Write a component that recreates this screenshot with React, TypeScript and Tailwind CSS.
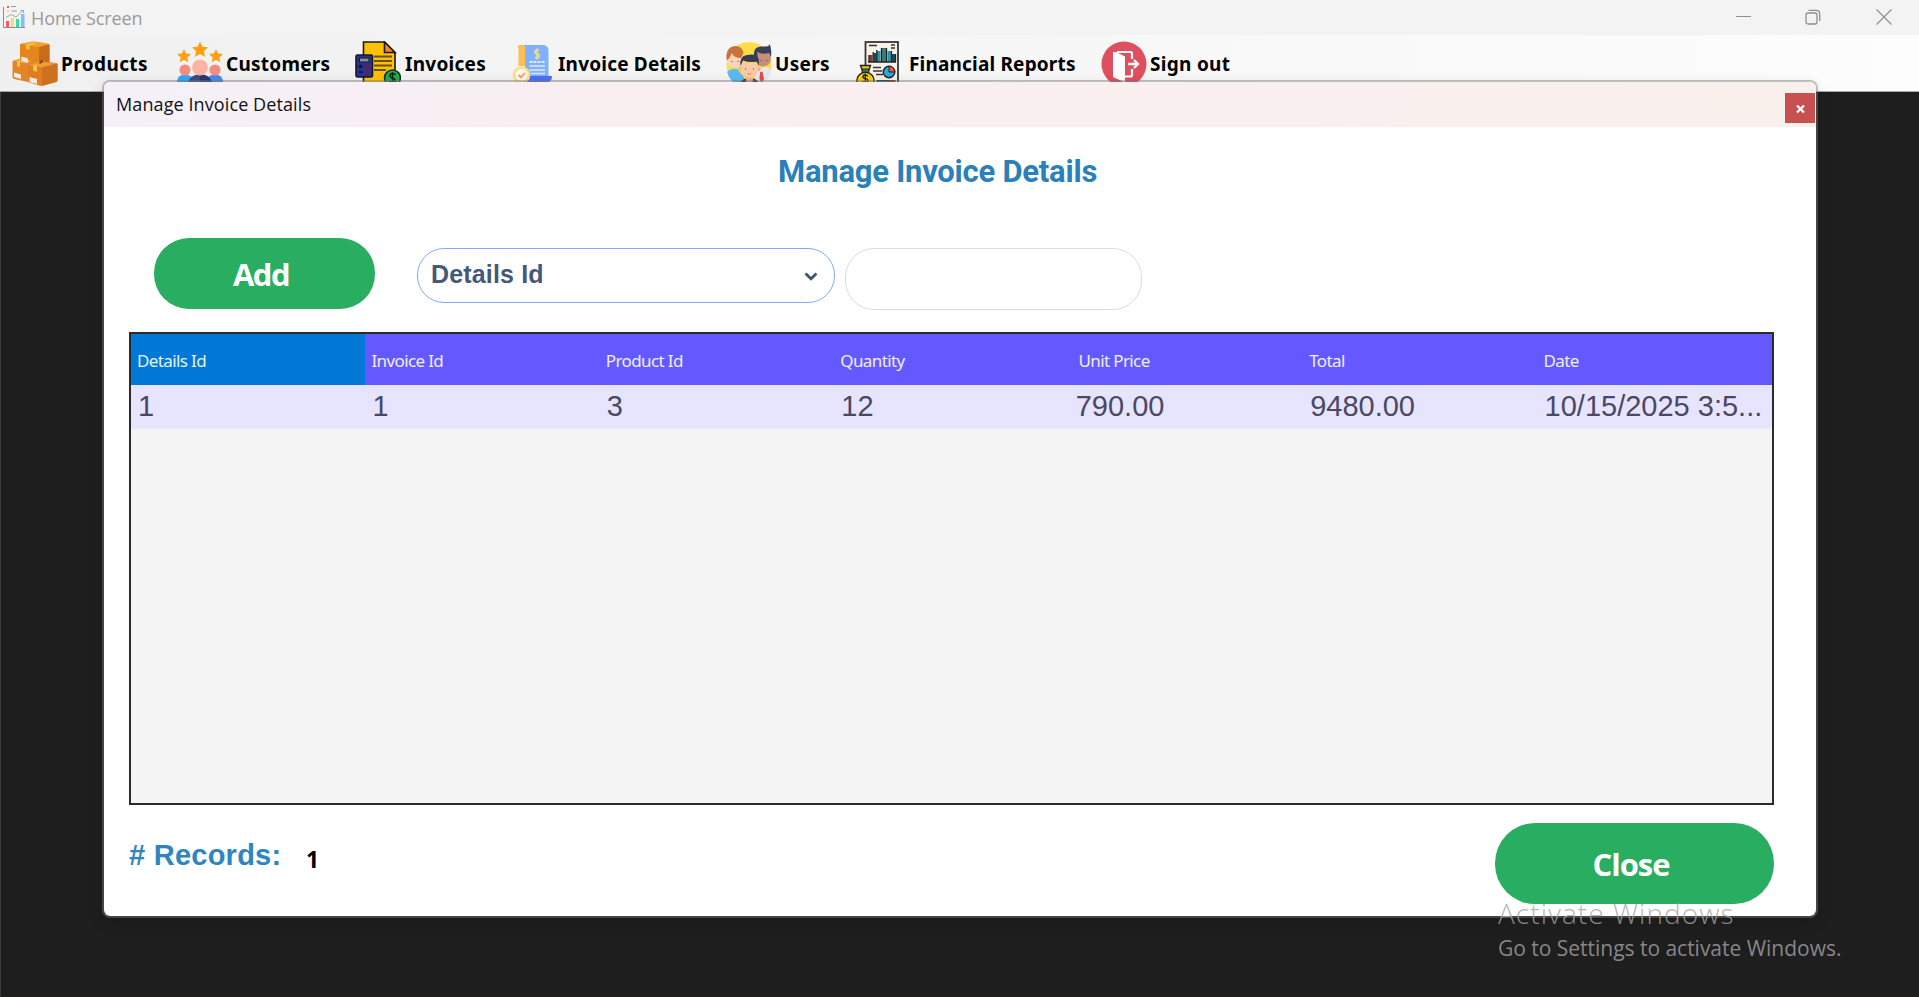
import React from "react";

const STAR = "M0 -8 L2.4 -2.8 L8 -2.2 L3.9 1.7 L5 7.3 L0 4.5 L-5 7.3 L-3.9 1.7 L-8 -2.2 L-2.4 -2.8 Z";

function AppIcon() {
  return (
    <svg width="24" height="24" viewBox="0 0 24 24" fill="none">
      <path d="M1.5 2V22.5H23" stroke="#8d8d95" strokeWidth="1" />
      <rect x="4" y="16" width="3" height="6" fill="#ff5a6a" />
      <rect x="9" y="13" width="3" height="9" fill="#ffd873" />
      <rect x="14" y="14" width="3" height="8" fill="#2fe0a0" />
      <rect x="19" y="9" width="3.5" height="13" fill="#7cc0ff" />
      <path d="M4 12.5L9 9.500L14 12L21 5.500M18.500 5.500H21.500V8" stroke="#a3a3a3" />
      <rect x="5" y="1" width="2" height="2" fill="#ff5a6a" />
      <rect x="5" y="5" width="2" height="2" fill="#ffd873" />
      <path d="M9 1.500H14M9.500 6H15" stroke="#9a9a9a" />
    </svg>
  );
}

function BoxesIcon() {
  return (
    <svg width="46" height="46" viewBox="0 0 46 46">
      <path d="M8 4Q8 3 9 2.800L20 0.800Q23 0.500 26 1L36 2.800Q37.500 3 37.500 4.500V22L20 25L8 20Z" fill="#e3871d" />
      <path d="M8.500 3L20 0.800Q23 0.500 26 1L37 3.200L27 6Z" fill="#f3a22f" />
      <path d="M27 6L37.500 3.500V22L27 24Z" fill="#c96d1a" />
      <path d="M14 3.500L21 1.500L25 2.200L17.500 4.600V9L14 7.600Z" fill="#ffc040" />
      <path d="M0.500 21Q0.500 20 1.500 19.500L9 17.500L22 21V42L16 41L2 38Q0.500 37.500 0.500 36Z" fill="#e2842a" />
      <path d="M0.800 20L9 17.500L20 20L13 22.500Z" fill="#f3a33e" />
      <path d="M16 24.500L28 20.500L44 22Q45.500 22.300 45.500 24V39Q45.500 40.500 44 41L31 44.500Q29.500 45 28 44.700L16 41Z" fill="#df7d20" />
      <path d="M16 24L29 20.500L45 22.300L30 26.500Z" fill="#ee9a36" />
      <path d="M30 26.500L45.500 22.500V39Q45.500 40.500 44 41L30 45Z" fill="#cf701d" />
      <path d="M5 20L8 19.200V26L5 25Z" fill="#ffc040" />
      <path d="M21 24.500L25 23.500V31L21 29.500Z" fill="#ffc040" />
      <path d="M9.500 15.500L16 17.500V22L9.500 20Z" fill="#f6e9e6" />
      <path d="M2 31.500L9 33.500V38L2 36Z" fill="#f6e9e6" />
      <path d="M17.500 36L25 38V43L17.500 41Z" fill="#f6e9e6" />
      <path d="M27 22L30 18.500L31 21L28 23Z" fill="#7a4416" />
    </svg>
  );
}

function CustomersIcon() {
  return (
    <svg width="46" height="46" viewBox="0 0 46 46">
      <path d="M0 46V40Q1 33.500 8 33.500Q15 33.500 17 40V46Z" fill="#35a7f7" />
      <path d="M29 46V40Q31 33.500 38 33.500Q45 33.500 46 40V46Z" fill="#4789ee" />
      <circle cx="8" cy="29" r="5.600" fill="#f28d80" />
      <circle cx="38" cy="29" r="5.600" fill="#f28d80" />
      <path d="M10 46Q11 34 23 33Q35 34 36 46Z" fill="#3d4d88" />
      <path d="M23 33Q35 34 36 46H23Z" fill="#293970" />
      <circle cx="23" cy="26.500" r="8" fill="#ffb5a3" />
      <path d={STAR} transform="translate(23 8.500)" fill="#ff9f0f" />
      <path d={STAR} transform="translate(7 15) scale(.86)" fill="#ff9f0f" />
      <path d={STAR} transform="translate(39 15) scale(.86)" fill="#ff9f0f" />
    </svg>
  );
}

function InvoicesIcon() {
  return (
    <svg width="46" height="46" viewBox="0 0 46 46">
      <path d="M8.500 46V1H29.500L40 11.500V46" fill="#ffc107" stroke="#1a1a1a" strokeWidth="1.600" />
      <path d="M29.500 1V11.500H40Z" fill="#f58a1c" stroke="#1a1a1a" strokeWidth="1.600" />
      <path d="M19 15.500H37M19 20H37M19 24.500H37M19 29H31" stroke="#6b4e08" strokeWidth="1.800" />
      <rect x="1" y="14" width="16.500" height="22" rx="1.500" fill="#27348b" stroke="#15182f" strokeWidth="1.600" />
      <rect x="4.500" y="17" width="9.500" height="4" fill="#8b8b96" stroke="#15182f" />
      <path d="M3.500 25.500H7.500M5.500 23.500V27.500M4 31H7.500" stroke="#0e1330" strokeWidth="1.600" />
      <path d="M10.500 24L14 27.500M14 24L10.500 27.500M10.500 30.500H14M10.500 33H14" stroke="#7d1842" strokeWidth="1.600" />
      <circle cx="37.500" cy="37" r="8" fill="#27ab4e" stroke="#16321f" strokeWidth="1.600" />
      <path d="M40.500 34Q39.500 32.500 37.500 32.500Q35 32.500 35 34.500Q35 36.500 37.500 37Q40 37.500 40 39.500Q40 41.500 37.500 41.500Q35.500 41.500 34.500 40M37.500 31V43" fill="none" stroke="#10251a" strokeWidth="1.400" />
    </svg>
  );
}

function DetailsIcon() {
  return (
    <svg width="46" height="46" viewBox="0 0 46 46">
      <path d="M10 4H32Q37.500 4 37.500 10V37H14V8Q14 4 10 4Z" fill="#82b1fb" />
      <path d="M8 4H11Q14 4 14 8V25H7.500V8Q6 5 8 4Z" fill="#ffbe55" />
      <path d="M19 35H41Q41 41 36 41H14Q19 40 19 35Z" fill="#4c6ff6" />
      <path d="M28.200 9Q24 8.500 24 11Q24 13 26 13Q28.300 13 28.300 15Q28.300 17.200 24 16.500M26 7.500V18.500" fill="none" stroke="#f0dc8c" strokeWidth="1.600" />
      <path d="M18.500 21H34" stroke="#dceaff" strokeWidth="1.800" strokeDasharray="3 1" />
      <path d="M18.500 25H34M18.500 29H34M20 32.500H34" stroke="#dceaff" strokeWidth="1.400" />
      <circle cx="10.500" cy="34" r="7.500" fill="#fff8ee" stroke="#fbdc88" strokeWidth="2.600" />
      <path d="M7.500 34L10 36.200L14 32" fill="none" stroke="#f3a04d" strokeWidth="1.800" />
    </svg>
  );
}

function UsersIcon() {
  return (
    <svg width="46" height="46" viewBox="0 0 46 46">
      <circle cx="23" cy="23.500" r="22.500" fill="#ffdd4a" />
      <path d="M1 31Q5 27 11 28L18 36V46H14Q4 41 1 31Z" fill="#5db9f2" />
      <path d="M29 34L35 27Q42 25 45.500 29Q43 40 33 46H28Z" fill="#e4e9f0" />
      <path d="M34 31L36.500 30.500L38 38L35.500 42L33.500 38Z" fill="#e84a4f" />
      <circle cx="9" cy="19" r="8" fill="#fbd3b8" />
      <path d="M0.500 19Q-0.500 5 10 5Q16 5 17.500 12L15 17Q8 17 5.500 12Q4 18 0.500 19Z" fill="#c9713a" />
      <circle cx="37" cy="17.500" r="8" fill="#c98f76" />
      <path d="M28 15Q27 6 35 5.500L40 5.500Q43 5.500 43.500 3Q46 7 45 16L43 12Q36 14 31.500 11V18Z" fill="#383f5c" />
      <circle cx="14.500" cy="28" r="2.300" fill="#f0b394" />
      <circle cx="32.500" cy="28" r="2.300" fill="#f0b394" />
      <path d="M15 22H32V29Q31 36.500 23.500 37Q16 36.500 15 29Z" fill="#fbc9a5" />
      <path d="M14.500 25Q13 15 21 14Q33 11.500 33 21L32.500 25L31 20.500Q23 22 17 19.500Z" fill="#353c58" />
      <path d="M12 46Q14 39 20 37.500H27Q33 39 35 46Z" fill="#2b3456" />
      <path d="M20 36.500H27V40L23.500 44L20 40Z" fill="#f0b48f" />
      <path d="M20 40L23.500 46L27 40L25 46H22Z" fill="#5db9f2" />
      <path d="M19.500 27.500V28.500M27.500 27.500V28.500M6 20V21M12 20V21M35 19V20M40.500 19V20" stroke="#7c4d46" strokeWidth="1.200" />
      <path d="M21.500 32.500Q23.500 34 25.500 32.500" stroke="#d47f68" fill="none" />
    </svg>
  );
}

function ReportsIcon() {
  return (
    <svg width="46" height="46" viewBox="0 0 46 46">
      <rect x="9.500" y="1" width="32.500" height="46" fill="#f7f1e7" stroke="#35353a" strokeWidth="1.800" />
      <path d="M13 4.500H21M35 4H39M35 7H39" stroke="#333" strokeWidth="1.500" />
      <path d="M13 14H16.500V21H13Z" fill="#8d3a2c" />
      <path d="M17.500 12H20.500V21H17.500ZM36 13H39.500V21H36Z" fill="#1f4a55" />
      <path d="M21 10H24.500V21H21ZM31.500 10H35V21H31.500Z" fill="#2597a8" />
      <path d="M26 7H30V21H26Z" fill="#3c7f78" />
      <path d="M12 21H40M13 14V21M17.200 11V21M20.800 9V21M25.500 7V21M30.500 7V21M35.500 10V21M39.500 13V21" stroke="#20242a" strokeWidth="1.300" />
      <path d="M17 26.500H25M17 30H26M20 33.500H27" stroke="#38383d" strokeWidth="1.600" />
      <circle cx="33" cy="31" r="5.800" fill="#29a8dd" stroke="#222" strokeWidth="1.400" />
      <path d="M33 31V25.200A5.800 5.800 0 0 1 38.800 31Z" fill="#e8563c" stroke="#222" />
      <rect x="21" y="39.500" width="18" height="3" fill="#1d7f9c" stroke="#222" />
      <rect x="33" y="39.500" width="6" height="3" fill="#b03b2c" />
      <path d="M6.500 30L4.500 24.500H14.500L12.500 30Z" fill="#f2c318" stroke="#222" strokeWidth="1.400" />
      <path d="M6.500 28L6 31.500H13L12.500 28Z" fill="#1b8d60" stroke="#222" />
      <circle cx="9.500" cy="40" r="8.700" fill="#f9cf12" stroke="#222" strokeWidth="1.400" />
      <path d="M12 35.500Q11 34 9.300 34Q7 34 7 35.700Q7 37.300 9.300 37.600Q12 38 12 39.700Q12 41.500 9.300 41.500Q7.300 41.500 6.300 40M9.300 32.500V43" fill="none" stroke="#222" strokeWidth="1.300" />
    </svg>
  );
}

function SignOutIcon() {
  return (
    <svg width="46" height="46" viewBox="0 0 46 46">
      <circle cx="23" cy="23" r="22.500" fill="#e04f5f" />
      <path d="M12 11H15L24 15.500V41.500L13 36.500Q12 36 12 35Z" fill="#fff" />
      <path d="M16 11H29.500Q31 11 31 12.500V18M31 28V34Q31 35.500 29.500 35.500H24" fill="none" stroke="#fff" strokeWidth="2.200" />
      <path d="M27 23H36M33 19L37 23L33 27" fill="none" stroke="#fff" strokeWidth="2.400" />
    </svg>
  );
}

const menu = [
  { label: "Products", Icon: BoxesIcon, box: "w-[165px] gap-[3px]", text: "tracking-[0.4px]" },
  { label: "Customers", Icon: CustomersIcon, box: "w-[178px] gap-[3px]", text: "tracking-[0.25px]" },
  { label: "Invoices", Icon: InvoicesIcon, box: "w-[156px] gap-[4px]", text: "tracking-[0.27px]" },
  { label: "Invoice Details", Icon: DetailsIcon, box: "w-[215px] gap-[1px]", text: "tracking-[0.2px]" },
  { label: "Users", Icon: UsersIcon, box: "w-[130px] gap-[3px]", text: "tracking-[0.3px]" },
  { label: "Financial Reports", Icon: ReportsIcon, box: "w-[245px] gap-[7px]", text: "tracking-[0.18px]" },
  { label: "Sign out", Icon: SignOutIcon, box: "w-[140px] gap-[3px]", text: "tracking-[0.3px]" },
];

const columns = [
  { title: "Details Id", value: "1" },
  { title: "Invoice Id", value: "1" },
  { title: "Product Id", value: "3" },
  { title: "Quantity", value: "12" },
  { title: "\u00a0Unit Price", value: "790.00" },
  { title: "Total", value: "9480.00" },
  { title: "Date", value: "10/15/2025 3:5..." },
];

function TitleBar() {
  return (
    <header className="flex h-[35px] items-center bg-[#f3f3f3] pl-[2px] text-[#8f8f8f]">
      <div className="pb-[2px]"><AppIcon /></div>
      <span className="ml-[5px] grow pt-[2px] text-[18px] tracking-[-0.1px] text-[#9a9a9a]">Home Screen</span>
      <svg width="15" height="15" viewBox="0 0 15 15" className="mr-[54px]">
        <path d="M0 6.500H15" stroke="#8f8f8f" />
      </svg>
      <svg width="16" height="16" viewBox="0 0 16 16" fill="none" stroke="#8f8f8f" strokeWidth="1.300" className="mr-[55px] mb-[2px]">
        <rect x="1" y="4" width="11" height="11" rx="2" />
        <path d="M3.500 1.300H11Q14.700 1.300 14.700 5V12" />
      </svg>
      <svg width="16" height="16" viewBox="0 0 16 16" className="mr-[27px] mb-[2px]">
        <path d="M0.500 0.500L15.500 15.500M15.500 0.500L0.500 15.500" stroke="#8f8f8f" strokeWidth="1.200" />
      </svg>
    </header>
  );
}

function MenuBar() {
  return (
    <nav className="flex h-[57px] items-start border-b border-[#a8a8a8] bg-linear-to-r from-[#f0f0f0] to-[#fdfdfd] pt-[6px] pl-[12px]">
      {menu.map(({ label, Icon, box, text }) => (
        <div key={label} className={`flex h-[46px] shrink-0 items-center ${box}`}>
          <Icon />
          <span className={`whitespace-nowrap text-[19px] leading-[45px] font-bold text-black font-['Noto_Sans',sans-serif] ${text}`}>
            {label}
          </span>
        </div>
      ))}
    </nav>
  );
}

function InvoiceWindow() {
  return (
    <section className="absolute top-[80px] left-[102px] flex h-[838px] w-[1716px] flex-col overflow-hidden rounded-[8px] border-2 border-[#757575]/45 bg-white bg-clip-padding shadow-[0_4px_14px_rgba(0,0,0,0.12)]">
      <div className="flex h-[45px] shrink-0 items-start bg-linear-to-r from-[#f5f0f8] via-[#f9eff2] via-25% to-[#f9f0ec] pl-[12px]">
        <span className="grow text-[18px] leading-[44px] tracking-[0.1px] text-[#111]">Manage Invoice Details</span>
        <button className="mt-[11px] mr-[1px] flex h-[30px] w-[30px] items-center justify-center bg-[#c75050]">
          <svg width="9" height="8" viewBox="0 0 9 8" className="mt-[2px]">
            <path d="M1 0.500L8 7.500M8 0.500L1 7.500" stroke="#fff" strokeWidth="2.200" />
          </svg>
        </button>
      </div>

      <h1 className="mt-[25px] ml-[674px] h-[40px] text-[31px] leading-[40px] font-bold tracking-[-0.24px] whitespace-nowrap text-[#2a80b9] font-['Roboto',sans-serif]">
        Manage Invoice Details
      </h1>

      <div className="mt-[46px] ml-[50px] flex h-[72px] items-start">
        <button className="h-[71px] w-[221px] rounded-[35px] bg-[#29ae61] pr-[7px] text-[31px] leading-[72px] font-bold tracking-[-1.5px] text-white">
          Add
        </button>
        <div className="mt-[10px] ml-[42px] flex h-[55px] w-[418px] items-start justify-between rounded-[27px] border-[1.5px] border-[#80aaff] pr-[16px] pl-[13px]">
          <span className="text-[25px] leading-[50px] font-bold tracking-[0.15px] text-[#44597a] font-['Liberation_Sans',sans-serif]">Details Id</span>
          <svg width="14" height="9" viewBox="0 0 14 9" fill="none" className="mt-[23px]">
            <path d="M1.500 1.500L7 6.800L12.500 1.500" stroke="#44546a" strokeWidth="2.800" />
          </svg>
        </div>
        <input readOnly className="mt-[10px] ml-[10px] h-[62px] w-[297px] rounded-[29px] border-[1.5px] border-[#d9dde3] bg-white" />
      </div>

      <div className="mt-[22px] ml-[25px] h-[473px] w-[1645px] border-2 border-[#2b2b2b] bg-[#f4f4f4]">
        <div className="grid h-[51px] grid-cols-7 bg-[#6459ff] text-[17px] leading-[53px] tracking-[-0.62px] text-white/90 font-['Noto_Sans',sans-serif]">
          {columns.map((c, i) => (
            <div key={c.title} className={`h-[51px] pl-[6px] ${i === 0 ? "bg-[#0078d7]" : ""}`}>{c.title}</div>
          ))}
        </div>
        <div className="grid h-[44px] grid-cols-7 border-b border-[#ebe9fa] bg-[#e7e4ff] text-[29px] leading-[43px] text-[#4b4863] font-['Liberation_Sans',sans-serif]">
          {columns.map((c) => (
            <div key={c.title} className="pl-[7px] whitespace-nowrap">{c.value}</div>
          ))}
        </div>
      </div>

      <div className="flex items-start pt-[18px] pl-[25px]">
        <span className="mt-[12px] w-[177px] text-[29px] leading-[40px] font-bold tracking-[0.25px] text-[#2e85c0] font-['Liberation_Sans',sans-serif]">
          # Records:
        </span>
        <span className="mt-[16px] grow text-[23px] leading-[40px] font-bold text-black font-['Noto_Sans',sans-serif]">1</span>
        <button className="mr-[42px] h-[81px] w-[279px] rounded-[40px] bg-[#29ae61] pr-[7px] text-[31px] leading-[82px] font-bold tracking-[-1.03px] text-white">
          Close
        </button>
      </div>
    </section>
  );
}

export default function App() {
  return (
    <div className="relative h-[997px] w-[1919px] overflow-hidden bg-[#1e1e1e] font-['Open_Sans',sans-serif]">
      <TitleBar />
      <MenuBar />
      <div className="h-[905px] border-b border-l border-b-[#2a1c1e] border-l-[#3c3c3c]" />
      <InvoiceWindow />
      <div className="pointer-events-none absolute top-[894px] left-[1498px] whitespace-nowrap text-[#a4a4a4]/80">
        <div className="text-[28px] leading-[38px] font-light tracking-[1.05px]">Activate Windows</div>
        <div className="text-[21px] leading-[32px] tracking-[-0.02px]">Go to Settings to activate Windows.</div>
      </div>
    </div>
  );
}
